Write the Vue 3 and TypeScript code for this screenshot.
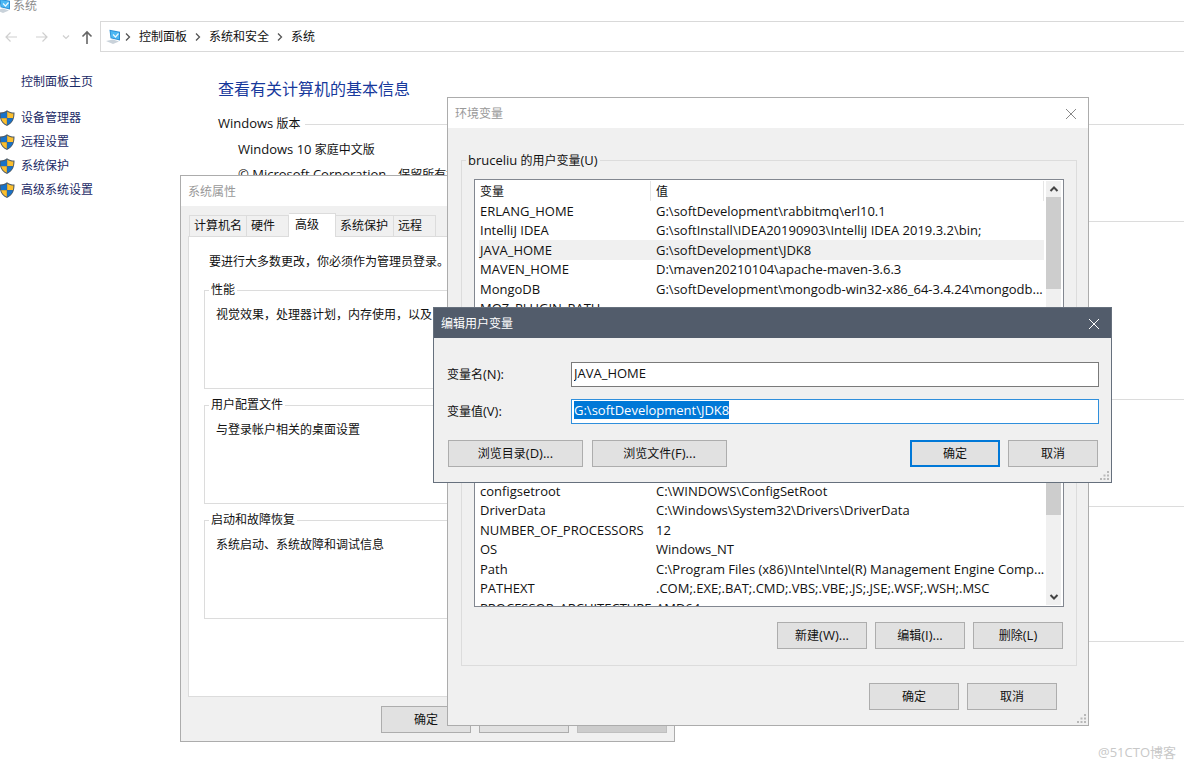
<script setup lang="ts">
import { onMounted, ref } from 'vue'

interface Variable {
  name: string
  value: string
  selected?: boolean
}

const crumbs: string[] = ['控制面板', '系统和安全', '系统']
const tasks: string[] = ['设备管理器', '远程设置', '系统保护', '高级系统设置']

const tabs: string[] = ['计算机名', '硬件', '高级', '系统保护', '远程']
const activeTab = ref('高级')
const groups = [
  { title: '性能', text: '视觉效果，处理器计划，内存使用，以及' },
  { title: '用户配置文件', text: '与登录帐户相关的桌面设置' },
  { title: '启动和故障恢复', text: '系统启动、系统故障和调试信息' },
]

const userVariables: Variable[] = [
  { name: 'ERLANG_HOME', value: 'G:\\softDevelopment\\rabbitmq\\erl10.1' },
  { name: 'IntelliJ IDEA', value: 'G:\\softInstall\\IDEA20190903\\IntelliJ IDEA 2019.3.2\\bin;' },
  { name: 'JAVA_HOME', value: 'G:\\softDevelopment\\JDK8', selected: true },
  { name: 'MAVEN_HOME', value: 'D:\\maven20210104\\apache-maven-3.6.3' },
  { name: 'MongoDB', value: 'G:\\softDevelopment\\mongodb-win32-x86_64-3.4.24\\mongodb...' },
  { name: 'MOZ_PLUGIN_PATH', value: '' },
]
const systemVariables: Variable[] = [
  { name: 'configsetroot', value: 'C:\\WINDOWS\\ConfigSetRoot' },
  { name: 'DriverData', value: 'C:\\Windows\\System32\\Drivers\\DriverData' },
  { name: 'NUMBER_OF_PROCESSORS', value: '12' },
  { name: 'OS', value: 'Windows_NT' },
  { name: 'Path', value: 'C:\\Program Files (x86)\\Intel\\Intel(R) Management Engine Comp...' },
  { name: 'PATHEXT', value: '.COM;.EXE;.BAT;.CMD;.VBS;.VBE;.JS;.JSE;.WSF;.WSH;.MSC' },
  { name: 'PROCESSOR_ARCHITECTURE', value: 'AMD64' },
]

const variableName = ref('JAVA_HOME')
const variableValue = ref('G:\\softDevelopment\\JDK8')
const valueBox = ref<HTMLInputElement | null>(null)

onMounted(() => {
  valueBox.value?.focus({ preventScroll: true })
  valueBox.value?.select()
})
</script>

<template>
  <div class="desktop">
    <header class="title">
      <svg class="pc" viewBox="0 0 16 16" aria-hidden="true">
        <path d="M4.500 0.800L15 2.800V11.500L5.500 9.200Z" fill="#2b8fd6" />
        <path d="M5.500 2L14 3.600V10.300L6.300 8.400Z" fill="#4db8f3" />
        <path d="M8 5.500l2.500 2.500 3-3.500" fill="none" stroke="#e8f7ff" stroke-width="1.200" />
        <path d="M1 12L8 10.500L14 12.500L8 15Z" fill="#c9d2da" />
      </svg>
      <span>系统</span>
    </header>
    <nav class="bar">
      <div class="arrows">
        <button type="button" aria-label="后退"><svg width="12" height="12" viewBox="0 0 12 12"><path d="M12 6H1M5.500 1.500L1 6l4.500 4.500" /></svg></button>
        <button type="button" aria-label="前进"><svg width="12" height="12" viewBox="0 0 12 12"><path d="M0 6h11M6.500 1.500L11 6l-4.500 4.500" /></svg></button>
        <button type="button" aria-label="最近"><svg width="8" height="12" viewBox="0 0 8 12"><path d="M1 4.500l3 3 3-3" /></svg></button>
        <button type="button" class="up" aria-label="上移"><svg width="12" height="14" viewBox="0 0 12 14"><path d="M6 14V2M1.500 6.500L6 2l4.500 4.500" /></svg></button>
      </div>
      <div class="address">
        <svg class="pc" viewBox="0 0 16 16" aria-hidden="true">
          <path d="M4.500 0.800L15 2.800V11.500L5.500 9.200Z" fill="#2b8fd6" />
          <path d="M5.500 2L14 3.600V10.300L6.300 8.400Z" fill="#4db8f3" />
          <path d="M8 5.500l2.500 2.500 3-3.500" fill="none" stroke="#e8f7ff" stroke-width="1.200" />
          <path d="M1 12L8 10.500L14 12.500L8 15Z" fill="#c9d2da" />
        </svg>
        <template v-for="crumb in crumbs" :key="crumb">
          <svg class="sep" width="6" height="10" viewBox="0 0 6 10"><path d="M1 1.500L4.500 5L1 8.500" /></svg>
          <a href="#">{{ crumb }}</a>
        </template>
      </div>
    </nav>

    <div class="content">
      <aside class="side">
        <a class="home" href="#">控制面板主页</a>
        <a v-for="task in tasks" :key="task" class="task" href="#">
          <svg width="16" height="16" viewBox="0 0 16 16" aria-hidden="true">
            <path d="M8 0.300C6 1.800 3.500 2.600 0.500 2.600C0.500 8.500 2 13.500 8 15.900C14 13.500 15.500 8.500 15.500 2.600C12.500 2.600 10 1.800 8 0.300Z" fill="#4d5a66" />
            <path d="M7.800 1.500C6 2.900 4 3.500 1.600 3.600C1.600 5.300 1.700 6.600 2 8H7.800Z" fill="#1872c9" />
            <path d="M8.200 1.500C10 2.900 12 3.500 14.400 3.600C14.400 5.300 14.300 6.600 14 8H8.200Z" fill="#fcbf2d" />
            <path d="M2.100 8.200H7.800V14.800C5 13.400 3 11.500 2.100 8.200Z" fill="#fcbf2d" />
            <path d="M13.900 8.200H8.200V14.800C11 13.400 13 11.500 13.900 8.200Z" fill="#1872c9" />
          </svg>
          <span>{{ task }}</span>
        </a>
      </aside>
      <main class="info">
        <h1>查看有关计算机的基本信息</h1>
        <section class="edition">
          <div class="rule"><h2><span class="en">Windows</span> 版本</h2></div>
          <p><span class="en">Windows 10</span> 家庭中文版</p>
          <p><span class="en">© Microsoft Corporation</span>。保留所有权利。</p>
        </section>
        <section class="block system"><div class="rule"></div></section>
        <section class="block names"><div class="rule"></div></section>
        <section class="block activation"><div class="rule"></div></section>
        <section class="block"><div class="rule"></div></section>
      </main>
    </div>

    <section class="window props" aria-label="系统属性">
      <div class="caption">系统属性</div>
      <div class="props-body">
        <div class="tabs" role="tablist">
          <button
            v-for="tab in tabs"
            :key="tab"
            type="button"
            role="tab"
            :aria-selected="tab === activeTab"
            :class="['tab', { active: tab === activeTab }]"
            @click="activeTab = tab"
          >{{ tab }}</button>
        </div>
        <div class="page">
          <p class="note">要进行大多数更改，你必须作为管理员登录。</p>
          <fieldset v-for="group in groups" :key="group.title" class="group">
            <legend>{{ group.title }}</legend>
            <p>{{ group.text }}</p>
          </fieldset>
        </div>
        <div class="actions">
          <button type="button" class="btn">确定</button>
          <button type="button" class="btn">取消</button>
          <button type="button" class="btn" disabled>应用<span class="en">(A)</span></button>
        </div>
      </div>
    </section>

    <section class="window env" aria-label="环境变量">
      <div class="caption">
        环境变量
        <button type="button" class="close" aria-label="关闭"><svg width="12" height="12" viewBox="0 0 12 12"><path d="M1 1l10 10M11 1L1 11" /></svg></button>
      </div>
      <div class="env-body">
        <fieldset class="group user">
          <legend><span class="en">bruceliu</span> 的用户变量<span class="en">(U)</span></legend>
          <div class="list">
            <div class="rows">
              <table>
                <thead>
                  <tr><th scope="col">变量</th><th scope="col">值</th></tr>
                </thead>
                <tbody>
                  <tr v-for="item in userVariables" :key="item.name" :class="{ selected: item.selected }">
                    <td>{{ item.name }}</td><td>{{ item.value }}</td>
                  </tr>
                </tbody>
              </table>
            </div>
            <div class="scroll">
              <button type="button" aria-label="向上滚动"><svg width="10" height="8" viewBox="0 0 10 8"><path d="M1.500 6L5 2.500L8.500 6" /></svg></button>
              <div class="thumb"></div>
            </div>
          </div>
        </fieldset>
        <fieldset class="group machine" aria-label="系统变量">
          <div class="list">
            <div class="rows">
              <table>
                <tbody>
                  <tr v-for="item in systemVariables" :key="item.name">
                    <td>{{ item.name }}</td><td>{{ item.value }}</td>
                  </tr>
                </tbody>
              </table>
            </div>
            <div class="scroll">
              <div class="thumb"></div>
              <button type="button" aria-label="向下滚动"><svg width="10" height="8" viewBox="0 0 10 8"><path d="M1.500 2L5 5.500L8.500 2" /></svg></button>
            </div>
          </div>
          <div class="actions">
            <button type="button" class="btn">新建<span class="en">(W)...</span></button>
            <button type="button" class="btn">编辑<span class="en">(I)...</span></button>
            <button type="button" class="btn">删除<span class="en">(L)</span></button>
          </div>
        </fieldset>
        <div class="actions main-actions">
          <button type="button" class="btn">确定</button>
          <button type="button" class="btn">取消</button>
        </div>
      </div>
      <svg class="grip" width="10" height="10" viewBox="0 0 10 10" aria-hidden="true"><path d="M7 0h2v2h-2zM7 3.500h2v2h-2zM3.500 3.500h2v2h-2zM7 7h2v2h-2zM3.500 7h2v2h-2zM0 7h2v2h-2z" /></svg>
    </section>

    <form class="window edit" aria-label="编辑用户变量" @submit.prevent>
      <div class="caption">
        编辑用户变量
        <button type="button" class="close" aria-label="关闭"><svg width="12" height="12" viewBox="0 0 12 12"><path d="M1 1l10 10M11 1L1 11" /></svg></button>
      </div>
      <div class="edit-body">
        <div class="field">
          <label for="variable-name">变量名<span class="en">(N):</span></label>
          <input id="variable-name" v-model="variableName" type="text" spellcheck="false" />
        </div>
        <div class="field">
          <label for="variable-value">变量值<span class="en">(V):</span></label>
          <input id="variable-value" ref="valueBox" v-model="variableValue" type="text" spellcheck="false" />
        </div>
        <div class="actions edit-actions">
          <button type="button" class="btn wide">浏览目录<span class="en">(D)...</span></button>
          <button type="button" class="btn wide">浏览文件<span class="en">(F)...</span></button>
          <span class="spacer"></span>
          <button type="submit" class="btn default">确定</button>
          <button type="button" class="btn">取消</button>
        </div>
      </div>
      <svg class="grip" width="10" height="10" viewBox="0 0 10 10" aria-hidden="true"><path d="M7 0h2v2h-2zM7 3.500h2v2h-2zM3.500 3.500h2v2h-2zM7 7h2v2h-2zM3.500 7h2v2h-2zM0 7h2v2h-2z" /></svg>
    </form>

    <div class="watermark">@51CTO博客</div>
  </div>
</template>

<style>
html,
body {
  background: #fff;
  overflow: hidden;
}
</style>

<style scoped>
.desktop {
  position: relative;
  min-height: 100vh;
  overflow: hidden;
  background: #fff;
  color: #111;
  font: 12px/16px "Open Sans", "Noto Sans CJK SC", sans-serif;
}
.desktop *,
.desktop *::after {
  box-sizing: border-box;
}
button,
input {
  font: inherit;
  color: inherit;
  margin: 0;
  padding: 0;
}
h1,
h2,
p {
  margin: 0;
  font-weight: normal;
}
a {
  color: inherit;
  text-decoration: none;
}
.en {
  font-size: 13px;
}

/* explorer chrome */
.title {
  display: flex;
  align-items: center;
  height: 21px;
  margin-left: -5px;
  padding-bottom: 9px;
  color: #8c8c8c;
}
.pc {
  width: 16px;
  height: 16px;
  flex: none;
}
.title span {
  margin-left: 2px;
}
.bar {
  display: flex;
  height: 31px;
}
.arrows {
  display: flex;
  align-items: center;
  width: 100px;
  padding-left: 5px;
}
.arrows button {
  display: flex;
  border: 0;
  background: none;
  margin-right: 19px;
}
.arrows button:nth-child(2) {
  margin-right: 14px;
}
.arrows button:nth-child(3) {
  margin-right: 11px;
}
.arrows path {
  fill: none;
  stroke: #cfcfcf;
  stroke-width: 1.2;
}
.arrows .up {
  margin-right: 0;
}
.arrows .up path {
  stroke: #666;
  stroke-width: 1.6;
}
.address {
  flex: 1;
  display: flex;
  align-items: center;
  padding-left: 4px;
  border: 1px solid #d9d9d9;
  border-right: 0;
}
.sep {
  margin: 0 8px;
}
.address .pc + .sep {
  margin-left: 4px;
}
.sep path {
  fill: none;
  stroke: #555;
  stroke-width: 1.3;
}

/* page content */
.content {
  display: flex;
}
.side {
  width: 218px;
  padding-top: 22px;
  color: #1b2a66;
}
.home {
  display: block;
  margin: 0 0 16px 21px;
}
.task {
  display: flex;
  align-items: center;
  height: 24px;
  margin-left: -1px;
}
.task span {
  margin-left: 6px;
}
.info {
  flex: 1;
  padding-top: 26px;
}
h1 {
  color: #17399c;
  font-size: 16px;
  line-height: 22px;
}
.rule {
  display: flex;
  align-items: center;
}
.rule h2 {
  font-size: 12px;
  margin-right: 5px;
}
.rule::after {
  content: "";
  flex: 1;
  height: 1px;
  background: #dcdcdc;
}
.edition {
  height: 121px;
  padding-top: 14px;
}
.edition .rule {
  height: 18px;
}
.edition .rule::after {
  margin-top: 3px;
}
.edition p {
  margin: 8px 0 0 20px;
}
.edition .rule + p {
  margin-top: 9px;
}
.block.system {
  height: 178px;
}
.block.names {
  height: 107px;
}
.block.activation {
  height: 135px;
}

/* windows */
.window {
  position: absolute;
  border: 1px solid #acacac;
  background: #f0f0f0;
}
.caption {
  display: flex;
  align-items: center;
  justify-content: space-between;
  height: 30px;
  padding: 1px 11px 0 7px;
  background: #fff;
  color: #999;
}
.close {
  display: flex;
  border: 0;
  background: none;
}
.close path {
  fill: none;
  stroke: #888;
  stroke-width: 1;
}
.grip {
  position: absolute;
  right: 1px;
  bottom: 1px;
  fill: #b8b8b8;
}
.btn {
  width: 90px;
  height: 27px;
  border: 1px solid #adadad;
  background: #e1e1e1;
}
.btn:disabled {
  background: #ccc;
  border-color: #bfbfbf;
  color: #838383;
}
.btn.wide {
  width: 135px;
}
.btn.default {
  border: 2px solid #0078d7;
}
.actions {
  display: flex;
  justify-content: flex-end;
  gap: 8px;
}
.group {
  min-width: 0;
  margin: 0;
  padding: 0 4px;
  border: 1px solid #dcdcdc;
}
.group legend {
  height: 18px;
  line-height: 18px;
  padding: 0 2px;
}

.props {
  left: 180px;
  top: 175px;
  width: 495px;
}
.props-body {
  padding: 7px 7px 8px;
}
.tabs {
  display: flex;
  align-items: flex-end;
  height: 23px;
  padding-left: 1px;
}
.tab {
  height: 21px;
  padding: 0 4px;
  border: 1px solid #dcdcdc;
  border-width: 1px 1px 0 0;
  background: #f0f0f0;
  text-align: left;
}
.tab:first-child {
  border-left-width: 1px;
}
.tab.active {
  position: relative;
  height: 24px;
  margin-bottom: -1px;
  padding: 0 16px 2px 6px;
  background: #fff;
}
.tab:nth-child(2),
.tab:last-child {
  padding-right: 13px;
}
.tab:nth-child(4) {
  padding-right: 5px;
}
.page {
  height: 461px;
  padding: 17px 15px 0;
  border: 1px solid #dcdcdc;
  background: #fff;
}
.note {
  margin: 0 0 11px 5px;
}
.page .group {
  height: 108px;
  margin-bottom: 7px;
}
.page .group p {
  padding: 8px 0 0 7px;
  white-space: nowrap;
}
.props .actions {
  padding-top: 9px;
}

.env {
  left: 447px;
  top: 97px;
  width: 642px;
}
.env-body {
  padding: 23px 11px 15px 13px;
}
.env .group {
  padding: 0 4px 16px;
}
.list {
  display: flex;
  overflow: hidden;
  margin: 0 8px;
  padding: 1px 2px 1px 4px;
  border: 1px solid #828790;
  background: #fff;
}
.user .list {
  height: 161px;
  margin-top: 10px;
}
.machine {
  margin-top: 103px;
}
.env .machine {
  padding-top: 18px;
}
.machine .list {
  height: 128px;
}
.rows {
  flex: 1;
  min-width: 0;
  margin-right: 2px;
}
table {
  width: 100%;
  table-layout: fixed;
  border-collapse: separate;
  border-spacing: 0;
  font-size: 13px;
}
th,
td {
  height: 19px;
  padding: 0 0 0 1px;
  line-height: 19px;
  text-align: left;
  font-weight: normal;
  white-space: nowrap;
}
th {
  height: 20px;
  font-size: 12px;
  border-right: 1px solid #e5e5e5;
}
th:first-child,
td:first-child {
  width: 172px;
}
th + th,
td + td {
  padding-left: 5px;
}
tbody tr:nth-child(odd) td {
  height: 20px;
}
.selected {
  background: #f0f0f0;
}
.scroll {
  flex: none;
  display: flex;
  flex-direction: column;
  width: 15px;
  background: #f0f0f0;
}
.scroll button {
  display: flex;
  align-items: center;
  justify-content: center;
  height: 16px;
  border: 0;
  background: none;
}
.scroll path {
  fill: none;
  stroke: #444;
  stroke-width: 2;
}
.thumb {
  height: 92px;
  background: #cdcdcd;
}
.machine .thumb {
  height: 34px;
  margin-bottom: auto;
}
.machine .actions {
  margin: 15px 9px 0;
}
.main-actions {
  padding: 17px 20px 0;
}

.edit {
  left: 433px;
  top: 307px;
  width: 679px;
  border-color: #66707d;
}
.edit .caption {
  background: #525c6b;
  color: #fff;
}
.edit .close path {
  stroke: #fff;
}
.edit-body {
  padding: 24px 12px 15px 13px;
}
.field {
  display: flex;
  align-items: center;
  margin-bottom: 12px;
}
.field label {
  width: 124px;
}
.field input {
  flex: 1;
  height: 25px;
  padding: 0 2px 3px;
  border: 1px solid #7a7a7a;
  border-radius: 0;
  background: #fff;
  font-size: 13px;
  outline: none;
}
.field input:focus {
  border-color: #2f8fdc;
}
.field input::selection {
  background: #0078d7;
  color: #fff;
}
.edit-actions {
  padding: 4px 1px 0;
}
.edit-actions .wide {
  margin-right: 1px;
}
.spacer {
  flex: 1;
}

.watermark {
  position: absolute;
  right: 8px;
  bottom: 6px;
  color: #c8c8c8;
  font-size: 13px;
}
</style>
